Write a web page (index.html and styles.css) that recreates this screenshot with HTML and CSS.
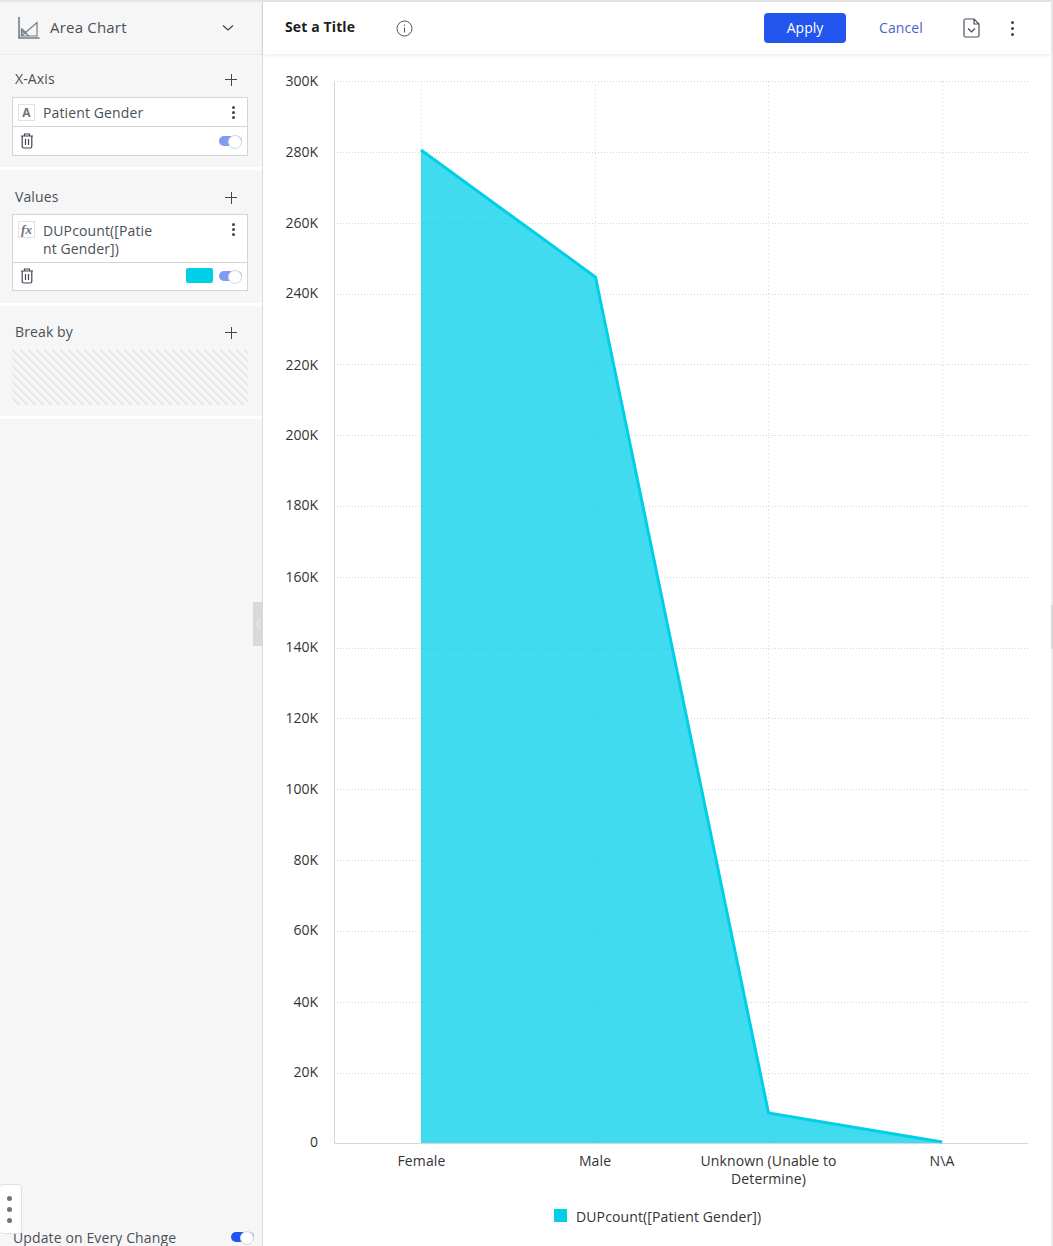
FILE: index.html
```html
<!DOCTYPE html>
<html lang="en">
<head>
  <meta charset="UTF-8" />
  <title>Area Chart</title>
  <link rel="stylesheet" href="styles.css">
</head>
<body>
<div class="app">

  <aside class="sidebar">
    <div class="type-picker">
      <svg class="type-icon" width="24" height="24" viewBox="0 0 24 24" fill="none" stroke="#747e89" stroke-width="1.200">
        <path stroke-width="1.600" d="M2 1V22H22.500"/>
        <path d="M4.500 20L20 6.500V20Z"/>
        <path stroke-width="1.400" d="M4.500 12.500L11.500 20M4.500 12.500V20M4.500 16H9"/>
      </svg>
      <span class="type-name">Area Chart</span>
      <svg class="chev" width="12" height="8" viewBox="0 0 12 8" fill="none" stroke="#3f4750" stroke-width="1.300"><path d="M1 1.500L6 6L11 1.500"/></svg>
    </div>

    <section class="panel panel-x">
      <div class="panel-head"><span>X-Axis</span><span class="plus"></span></div>
      <div class="field">
        <div class="field-top">
          <span class="field-type">A</span>
          <span class="field-name">Patient Gender</span>
          <span class="kebab"><i></i><i></i><i></i></span>
        </div>
        <div class="field-bottom">
          <svg class="trash" width="14" height="16" viewBox="0 0 14 16" fill="none" stroke="#3f4750" stroke-width="1.200"><path d="M1 3H13M4.500 3V1H9.500V3M2.200 3V13.500Q2.200 15 3.700 15H10.300Q11.800 15 11.800 13.500V3M5.500 6V12M8.500 6V12"/></svg>
          <span class="toggle toggle-soft"></span>
        </div>
      </div>
    </section>

    <section class="panel panel-values">
      <div class="panel-head"><span>Values</span><span class="plus"></span></div>
      <div class="field">
        <div class="field-top field-top-tall">
          <span class="field-type field-type-fx">fx</span>
          <span class="field-name field-name-wrap">DUPcount([Patie<br>nt Gender])</span>
          <span class="kebab"><i></i><i></i><i></i></span>
        </div>
        <div class="field-bottom field-bottom-short">
          <svg class="trash" width="14" height="16" viewBox="0 0 14 16" fill="none" stroke="#3f4750" stroke-width="1.200"><path d="M1 3H13M4.500 3V1H9.500V3M2.200 3V13.500Q2.200 15 3.700 15H10.300Q11.800 15 11.800 13.500V3M5.500 6V12M8.500 6V12"/></svg>
          <span class="swatch"></span>
          <span class="toggle toggle-soft"></span>
        </div>
      </div>
    </section>

    <section class="panel panel-break">
      <div class="panel-head"><span>Break by</span><span class="plus"></span></div>
      <div class="dropzone"></div>
    </section>

    <div class="update-row">
      <span>Update on Every Change</span>
      <span class="toggle"></span>
    </div>

    <div class="float-menu"><i></i><i></i><i></i></div>
    <div class="collapse-handle">
      <svg width="6" height="10" viewBox="0 0 6 10" fill="none" stroke="#e6e6e6" stroke-width="1.500"><path d="M5 1L1 5L5 9"/></svg>
    </div>
  </aside>

  <main class="main">
    <header class="topbar">
      <span class="title">Set a Title</span>
      <svg class="info" width="17" height="17" viewBox="0 0 17 17" fill="none" stroke="#4a5058" stroke-width="1"><circle cx="8.500" cy="8.500" r="7.500"/><path d="M8.500 7.500V12.500M8.500 4.500V5.800"/></svg>
      <span class="spacer"></span>
      <button class="apply">Apply</button>
      <a class="cancel">Cancel</a>
      <svg class="save" width="17" height="20" viewBox="0 0 17 20" fill="none" stroke="#4a5058" stroke-width="1.200"><path d="M1 2.500Q1 1 2.500 1H11L16 6V17.500Q16 19 14.500 19H2.500Q1 19 1 17.500ZM11 1V6H16M5 10.500L8.500 14L12 10.500"/></svg>
      <span class="kebab kebab-top"><i></i><i></i><i></i></span>
    </header>

    <svg class="chart" width="788" height="1192" viewBox="263 54 788 1192">
      <path class="grid-h" d="M334 81.500H1028M334 152.500H1028M334 223.500H1028M334 294.500H1028M334 364.500H1028M334 435.500H1028M334 506.500H1028M334 577.500H1028M334 648.500H1028M334 718.500H1028M334 789.500H1028M334 860.500H1028M334 931.500H1028M334 1002.500H1028M334 1073.500H1028"/>
      <path class="grid-v" d="M421.500 81V1143M595.500 81V1143M768.500 81V1143M942.500 81V1143"/>
      <path class="axis" d="M334.500 81V1143.500H1028"/>
      <path class="area" d="M421 150L595.500 277L768.500 1113L942 1142V1143H421Z"/>
      <path class="line" d="M421 150L595.500 277L768.500 1113L942 1142"/>
      <g class="ylabels">
        <text x="318" y="86">300K</text>
        <text x="318" y="157">280K</text>
        <text x="318" y="228">260K</text>
        <text x="318" y="298">240K</text>
        <text x="318" y="370">220K</text>
        <text x="318" y="440">200K</text>
        <text x="318" y="510">180K</text>
        <text x="318" y="582">160K</text>
        <text x="318" y="652">140K</text>
        <text x="318" y="723">120K</text>
        <text x="318" y="794">100K</text>
        <text x="318" y="865">80K</text>
        <text x="318" y="935">60K</text>
        <text x="318" y="1007">40K</text>
        <text x="318" y="1077">20K</text>
        <text x="318" y="1147">0</text>
      </g>
      <g class="xlabels">
        <text x="421.500" y="1166">Female</text>
        <text x="595" y="1166">Male</text>
        <text x="768.500" y="1166">Unknown (Unable to</text>
        <text x="768.500" y="1184">Determine)</text>
        <text x="942" y="1166">N\A</text>
      </g>
      <rect class="legend-key" x="554" y="1209" width="13" height="13"/>
      <text class="legend-text" x="576" y="1222">DUPcount([Patient Gender])</text>
    </svg>
    <div class="edge-handle"></div>
  </main>

</div>
</body>
</html>
```

FILE: styles.css
```css
* {
  box-sizing: border-box;
}
html, body {
  margin: 0;
  height: 100%;
  overflow: hidden;
}
body {
  font-family: "Open Sans", sans-serif;
  font-size: 14px;
  letter-spacing: 0.12px;
  color: #4a5058;
  background: white;
}
.app {
  display: flex;
  height: 1246px;
  border-top: 2px solid #e6e6e6;
  border-right: 2px solid #ececec;
}

/* left panel */
.sidebar {
  position: relative;
  flex: none;
  display: flex;
  flex-direction: column;
  width: 263px;
  background: #f6f6f6;
  border-right: 1px solid #d9d9d9;
}
.type-picker {
  display: flex;
  align-items: center;
  height: 53px;
  padding: 0 28px 0 17px;
  border-bottom: 1px solid #ebebeb;
}
.type-name {
  flex: 1;
  margin-left: 9px;
  padding-bottom: 2px;
  font-size: 15px;
  letter-spacing: 0.2px;
}
.panel {
  padding: 0 14px 0 12px;
  border-bottom: 3px solid white;
}
.panel-x {
  height: 115px;
}
.panel-values {
  height: 136px;
}
.panel-break {
  height: 113px;
}
.panel-head {
  display: flex;
  align-items: center;
  justify-content: space-between;
  height: 42px;
  padding: 4px 3px 0 3px;
}
.panel-values .panel-head {
  height: 44px;
  padding-top: 8px;
}
.panel-break .panel-head {
  height: 44px;
  padding-top: 6px;
}
.plus {
  position: relative;
  width: 12px;
  height: 12px;
  margin-right: 8px;
  margin-top: 3px;
  background:
    linear-gradient(#3f4750, #3f4750) center / 12px 1px no-repeat,
    linear-gradient(#3f4750, #3f4750) center / 1px 12px no-repeat;
}
.field {
  width: 236px;
  background: white;
  border: 1px solid #d4d4d4;
}
.field-top {
  display: flex;
  align-items: center;
  height: 29px;
  padding: 0 12px 0 5px;
  border-bottom: 1px solid #d4d4d4;
}
.field-top-tall {
  align-items: flex-start;
  height: 48px;
  padding-top: 7px;
}
.field-type {
  display: flex;
  flex: none;
  align-items: center;
  justify-content: center;
  width: 17px;
  height: 17px;
  border: 1px solid #e2e2e2;
  font-size: 12px;
  font-weight: 700;
  color: #6b7480;
}
.field-type-fx {
  margin-top: -1px;
  font-family: "Liberation Serif", serif;
  font-size: 13px;
  font-style: italic;
}
.field-name {
  flex: 1;
  margin-left: 8px;
}
.field-name-wrap {
  line-height: 18px;
  margin-top: 0;
}
.kebab {
  display: flex;
  flex: none;
  flex-direction: column;
  gap: 2px;
  width: 3px;
}
.kebab i {
  width: 3px;
  height: 3px;
  border-radius: 50%;
  background: #3f4750;
}
.field-top-tall .kebab {
  margin-top: 1px;
}
.field-bottom {
  display: flex;
  align-items: center;
  height: 28px;
  padding: 0 5px 0 7px;
}
.field-bottom-short {
  height: 27px;
  padding-bottom: 2px;
}
.trash {
  margin-right: auto;
}
.swatch {
  width: 27px;
  height: 15px;
  margin-right: 6px;
  border-radius: 2px;
  background: #00cfe8;
}
.toggle {
  position: relative;
  display: block;
  width: 23px;
  height: 10px;
  border-radius: 5px;
  background: #2255ee;
}
.toggle::after {
  content: "";
  position: absolute;
  top: -1px;
  right: 0;
  width: 12px;
  height: 12px;
  border: 1px solid #d4d8e0;
  border-radius: 50%;
  background: white;
}
.toggle-soft {
  background: #7f9bf5;
}
.dropzone {
  height: 55px;
  width: 236px;
  background: repeating-linear-gradient(45deg, #f6f6f6 0 4.657px, #e2e2e2 4.657px 5.657px);
}
.update-row {
  display: flex;
  align-items: center;
  justify-content: space-between;
  margin-top: auto;
  height: 18px;
  padding: 0 8px 0 13px;
}
.float-menu {
  position: absolute;
  left: -1px;
  top: 1182px;
  display: flex;
  flex-direction: column;
  align-items: center;
  justify-content: center;
  gap: 6px;
  width: 23px;
  height: 50px;
  padding-right: 3px;
  background: white;
  border: 1px solid #e2e2e2;
  border-radius: 4px;
}
.float-menu i {
  width: 5px;
  height: 5px;
  border-radius: 50%;
  background: #6b7480;
}
.collapse-handle {
  position: absolute;
  right: 0;
  top: 600px;
  display: flex;
  align-items: center;
  justify-content: center;
  width: 9px;
  height: 44px;
  background: #d9d9d9;
}

/* chart area */
.main {
  position: relative;
  flex: 1;
  min-width: 0;
}
.topbar {
  position: relative;
  display: flex;
  align-items: center;
  height: 52px;
  padding: 0 37px 0 22px;
  background: white;
  box-shadow: 0 1px 4px rgba(0, 0, 0, 0.09);
}
.title {
  margin-top: -4px;
  font-weight: 700;
  color: #1d1d1d;
}
.info {
  margin-left: 41px;
  margin-top: 1px;
}
.spacer {
  flex: 1;
}
.apply {
  width: 82px;
  height: 30px;
  padding: 0 0 2px;
  border: 0;
  border-radius: 4px;
  background: #2255ee;
  color: white;
  font-family: inherit;
  font-size: 14px;
}
.cancel {
  margin-left: 33px;
  margin-top: -2px;
  color: #4a63c8;
}
.save {
  margin-left: 40px;
}
.kebab-top {
  margin-left: 31px;
  gap: 3px;
}
.kebab-top i {
  width: 3px;
  height: 3px;
}
.chart {
  display: block;
  font-family: "Open Sans", sans-serif;
  font-size: 14px;
  fill: #333;
}
.grid-h, .grid-v {
  fill: none;
  stroke: #d4d4d4;
  stroke-width: 1;
}
.grid-h {
  stroke-dasharray: 1 2;
}
.grid-v {
  stroke-dasharray: 1 3;
}
.axis {
  fill: none;
  stroke: #d6d6d6;
}
.area {
  fill: #00cfe8;
  fill-opacity: 0.75;
}
.line {
  fill: none;
  stroke: #00cfe8;
  stroke-width: 3;
}
.ylabels text {
  text-anchor: end;
  letter-spacing: 0;
}
.xlabels text {
  text-anchor: middle;
}
.legend-key {
  fill: #00cfe8;
}
.edge-handle {
  position: absolute;
  right: -2px;
  top: 603px;
  width: 2px;
  height: 44px;
  background: #d9d9d9;
}
```
